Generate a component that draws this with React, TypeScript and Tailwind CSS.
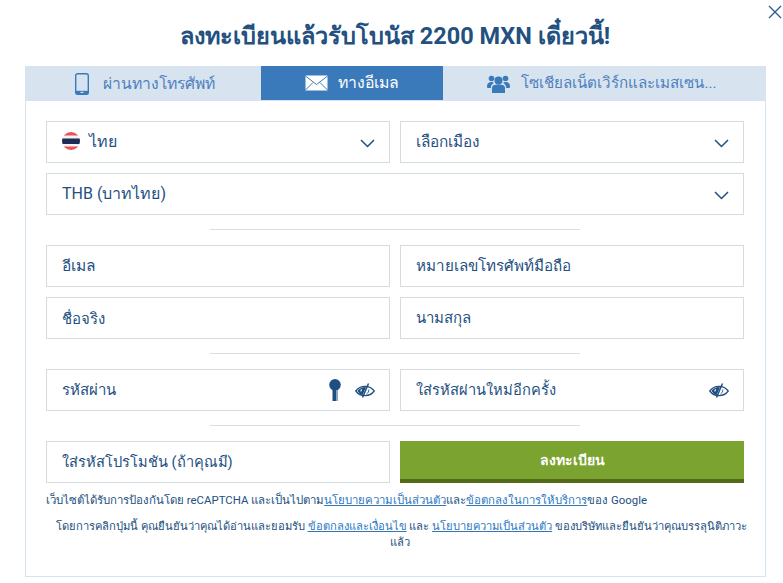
function Flag() {
    return (
        <svg width="18" height="18" viewBox="0 0 18 18" className="shrink-0 -mt-[2px]">
            <defs>
                <clipPath id="flag-clip"><circle cx="9" cy="9" r="9" /></clipPath>
            </defs>
            <g clipPath="url(#flag-clip)">
                <rect width="18" height="18" fill="#f1f2f5" />
                <rect width="18" height="3.500" fill="#ef5053" />
                <rect y="14.500" width="18" height="3.500" fill="#ef5053" />
                <rect y="6.500" width="18" height="5.500" fill="#1d2b55" />
            </g>
        </svg>
    );
}

function EyeOff() {
    return (
        <svg width="20" height="15" viewBox="0 0 20 15" fill="none" className="shrink-0">
            <path d="M0.800 8C3 5 6 3.400 10 3.400S17 5 19.200 8C17 11 14 12.600 10 12.600S3 11 0.800 8Z" stroke="#1f4f82" strokeWidth="1.300" />
            <path d="M2.500 8C4 6 6 4.400 9.500 4L11 4.600L7.500 12C5 11.400 3.800 9.800 2.500 8Z" fill="#1f4f82" />
            <path d="M7 6.500A1.700 1.700 0 0 0 6 8.500" stroke="white" strokeWidth="1.100" />
            <path d="M13.500 0.500L7.500 14.500" stroke="#1f4f82" strokeWidth="1.500" />
            <path d="M13.800 6.500C14 8.500 13 10 11.500 11" stroke="#1f4f82" strokeWidth="0.900" />
        </svg>
    );
}

function Key() {
    return (
        <svg width="12" height="22" viewBox="0 0 12 22" className="shrink-0">
            <circle cx="6" cy="5.800" r="5.800" fill="#1f4f82" />
            <rect x="3.500" y="9" width="5" height="13" fill="#1f4f82" />
            <rect x="7" y="11" width="1.500" height="11" fill="#8aa5c1" />
        </svg>
    );
}

function Chevron() {
    return (
        <svg width="15" height="9" viewBox="0 0 15 9" fill="none" className="shrink-0 mt-[3px]">
            <path d="M1 1L7.500 7.500L14 1" stroke="#1f4f82" strokeWidth="1.500" />
        </svg>
    );
}

function Field({ children, right, full, size = "text-[15px]" }: { children: React.ReactNode; right?: React.ReactNode; full?: boolean; size?: string }) {
    return (
        <div className={`h-[42px] ${full ? "w-full" : "w-[344px]"} ${size} border border-[#d5dcdf] bg-white flex items-center justify-between pl-[15px] pr-[14px] text-[#23507f]`}>
            <div className="flex items-center gap-[9px] whitespace-nowrap">{children}</div>
            {right}
        </div>
    );
}

function Divider() {
    return <div className="h-px w-[370px] bg-[#d9dedf] mx-auto mt-[14px] mb-[15px]" />;
}

export default function App() {
    return (
        <div className="relative w-[783px] h-[583px] bg-white overflow-hidden font-['Roboto','Noto_Sans',sans-serif]">
            {/* Close */}
            <svg width="14" height="14" viewBox="0 0 14 14" fill="none" className="absolute top-[5px] right-[1px]">
                <path d="M1 1L13 13M13 1L1 13" stroke="#2c5d8f" strokeWidth="1.400" />
            </svg>

            <h1 className="h-[66px] pt-[20px] pl-[7px] text-center text-[23.500px] leading-[32px] font-bold text-[#23507f]">
                ลงทะเบียนแล้วรับโบนัส 2200 MXN เดี๋ยวนี้!
            </h1>

            <div className="mx-[25px] w-[741px] h-[511px] border border-t-0 border-[#d7e4f0]">
                {/* Tabs */}
                <div className="h-[35px] flex bg-[#d7e4f0]">
                    <div className="w-[234px] pl-[3px] flex items-center justify-center gap-[14px] text-[#4f7fbd] text-[15.700px]">
                        <svg width="14" height="22" viewBox="0 0 14 22" fill="none">
                            <rect x="0.700" y="0.700" width="12.600" height="20.600" rx="2" stroke="#3a7aba" strokeWidth="1.400" />
                            <rect x="0.700" y="17.800" width="12.600" height="3.500" fill="#3a7aba" />
                            <rect x="5.500" y="18.800" width="3" height="1.200" fill="#d7e4f0" />
                        </svg>
                        <span>ผ่านทางโทรศัพท์</span>
                    </div>
                    <div className="ml-px w-[182px] h-[34px] bg-[#3a7aba] flex items-center justify-center gap-[10px] text-white text-[15.800px]">
                        <svg width="23" height="16" viewBox="0 0 23 16" fill="none">
                            <rect x="0.500" y="0.500" width="22" height="15" fill="white" />
                            <path d="M0.500 1L11.500 9.500L22.500 1M0.500 15L8 7.500M22.500 15L15 7.500" stroke="#3a7aba" strokeWidth="1" />
                        </svg>
                        <span>ทางอีเมล</span>
                    </div>
                    <div className="ml-px flex-1 pr-[5px] flex items-center justify-center gap-[11px] text-[#4f7fbd] text-[15.200px]">
                        <svg width="23" height="18" viewBox="0 0 23 18" fill="#3a7aba">
                            <circle cx="11.500" cy="5.500" r="4" />
                            <circle cx="4.500" cy="3.500" r="2.800" />
                            <circle cx="18.500" cy="3.500" r="2.800" />
                            <path d="M5 18V13C5 10.500 7 9.500 11.500 9.500S18 10.500 18 13V18Z" />
                            <path d="M0 11.500C0 8.500 1.500 7 4.500 7C5.500 7 6.500 7.500 7 8C5 9 3.800 10.500 3.800 13H1C0.400 13 0 12.500 0 11.500Z" />
                            <path d="M23 11.500C23 8.500 21.500 7 18.500 7C17.500 7 16.500 7.500 16 8C18 9 19.200 10.500 19.200 13H22C22.600 13 23 12.500 23 11.500Z" />
                        </svg>
                        <span>โซเชียลเน็ตเวิร์กและเมสเซน...</span>
                    </div>
                </div>

                {/* Form */}
                <div className="pl-[20px] pr-[21px] pt-[20px]">
                    <div className="flex flex-col gap-[10px]">
                        <div className="flex gap-[10px]">
                            <Field size="text-[16px]" right={<Chevron />}><Flag /><span>ไทย</span></Field>
                            <Field size="text-[15.300px]" right={<Chevron />}>เลือกเมือง</Field>
                        </div>
                        <Field full size="text-[16px]" right={<Chevron />}>THB (บาทไทย)</Field>
                    </div>
                    <Divider />
                    <div className="flex flex-col gap-[10px]">
                        <div className="flex gap-[10px]">
                            <Field size="text-[15.500px] pt-[2px]">อีเมล</Field>
                            <Field size="text-[15.200px]">หมายเลขโทรศัพท์มือถือ</Field>
                        </div>
                        <div className="flex gap-[10px]">
                            <Field size="text-[15px] pt-[2px]">ชื่อจริง</Field>
                            <Field>นามสกุล</Field>
                        </div>
                    </div>
                    <Divider />
                    <div className="flex gap-[10px]">
                        <Field right={<div className="flex items-center gap-[14px]"><Key /><EyeOff /></div>}>รหัสผ่าน</Field>
                        <Field size="text-[14.700px]" right={<EyeOff />}>ใส่รหัสผ่านใหม่อีกครั้ง</Field>
                    </div>
                    <Divider />
                    <div className="flex gap-[10px]">
                        <Field size="text-[14.600px] pt-[2px]">ใส่รหัสโปรโมชัน (ถ้าคุณมี)</Field>
                        <div className="h-[42px] w-[344px] bg-[#7ba32f] border-b-4 border-[#536b19] flex items-center justify-center text-white text-[14px] font-bold">
                            ลงทะเบียน
                        </div>
                    </div>

                    <p className="mt-[9px] text-[11.400px] leading-[16px] whitespace-nowrap text-[#23507f]">
                        เว็บไซต์ได้รับการป้องกันโดย reCAPTCHA และเป็นไปตาม<span className="text-[#2f78c0] underline">นโยบายความเป็นส่วนตัว</span>และ<span className="text-[#2f78c0] underline">ข้อตกลงในการให้บริการ</span>ของ Google
                    </p>
                    <p className="mt-[11px] pl-[10px] text-center text-[11.200px] leading-[16px] whitespace-nowrap text-[#23507f]">
                        โดยการคลิกปุ่มนี้ คุณยืนยันว่าคุณได้อ่านและยอมรับ <span className="text-[#2f78c0] underline">ข้อตกลงและเงื่อนไข</span> และ <span className="text-[#2f78c0] underline">นโยบายความเป็นส่วนตัว</span> ของบริษัทและยืนยันว่าคุณบรรลุนิติภาวะ<br />แล้ว
                    </p>
                </div>
            </div>
        </div>
    );
}
